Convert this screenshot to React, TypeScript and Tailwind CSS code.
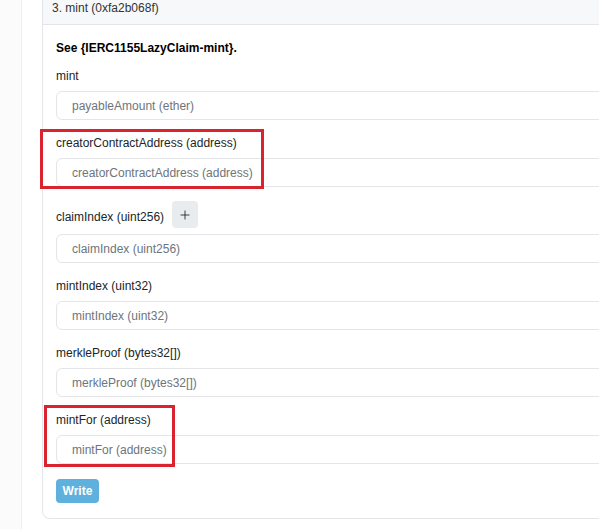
import { Plus } from 'lucide-react';

interface FieldProps {
  label: string;
  placeholder: string;
  addable?: boolean;
}

function Field({ label, placeholder, addable = false }: FieldProps) {
  return (
    <div className={`flex flex-col ${addable ? '-mt-px' : ''}`}>
      {addable ? (
        <div className="flex h-[27px] items-stretch gap-[8px]">
          <span className="mb-[3px] self-end leading-4">{label}</span>
          <button className="flex w-[26px] items-center justify-center rounded-[4px] bg-[#e9ecef] text-[#212529]">
            <Plus size={14} strokeWidth={1.5} />
          </button>
        </div>
      ) : (
        <span className="leading-4">{label}</span>
      )}
      <div
        className={`${addable ? 'mt-[6px]' : 'mt-[7px]'} flex h-[29px] items-center rounded-[6px] border border-[#e3e5e8] bg-white pl-[15px] text-[#6c757d]`}
      >
        {placeholder}
      </div>
    </div>
  );
}

export default function App() {
  const fields: FieldProps[] = [
    { label: 'creatorContractAddress (address)', placeholder: 'creatorContractAddress (address)' },
    { label: 'claimIndex (uint256)', placeholder: 'claimIndex (uint256)', addable: true },
    { label: 'mintIndex (uint32)', placeholder: 'mintIndex (uint32)' },
    { label: 'merkleProof (bytes32[])', placeholder: 'merkleProof (bytes32[])' },
    { label: 'mintFor (address)', placeholder: 'mintFor (address)' },
  ];

  return (
    <div className="relative flex h-[529px] w-[599px] overflow-hidden bg-white font-['Liberation_Sans',Arial,sans-serif] text-[12px] text-[#212529]">
      {/* left rail */}
      <div className="w-[22px] shrink-0 border-r border-[#eceef1] bg-[#fbfbfc]" />

      <div className="flex shrink-0 flex-col pl-[20px]">
        {/* method card */}
        <div className="w-[640px] rounded-b-[8px] border border-t-0 border-[#e3e5e8]">
          <div className="h-[25px] border-b border-[#e3e5e8] bg-[#f7f8fa] pl-[9px] leading-4 text-[#333]">
            3. mint (0xfa2b068f)
          </div>

          <div className="flex flex-col px-[13px] pt-[15px] pb-[15px]">
            <p className="font-bold leading-4 text-black">See {'{'}IERC1155LazyClaim-mint{'}'}.</p>

            <div className="mt-[12px] flex flex-col">
              <span className="leading-4">mint</span>
              <div className="mt-[7px] flex h-[29px] items-center rounded-[6px] border border-[#e3e5e8] pl-[15px] text-[#6c757d]">
                payableAmount (ether)
              </div>
            </div>

            <div className="mt-[15px] flex flex-col gap-[15px]">
              {fields.map((f) => (
                <Field key={f.label} {...f} />
              ))}
            </div>

            <button className="mt-[15px] h-[24px] w-[43px] rounded-[4px] bg-[#5eb1dc] font-bold text-white">
              Write
            </button>
          </div>
        </div>

        {/* next card */}
        <div className="mt-[10px] h-[20px] w-[640px] rounded-t-[8px] border border-[#e3e5e8]" />
      </div>

      {/* annotation boxes */}
      <div className="pointer-events-none absolute left-[40px] top-[129px] h-[60px] w-[224px] border-[3px] border-[#d9232e]" />
      <div className="pointer-events-none absolute left-[44px] top-[405px] h-[62px] w-[131px] border-[3px] border-[#d9232e]" />
    </div>
  );
}
